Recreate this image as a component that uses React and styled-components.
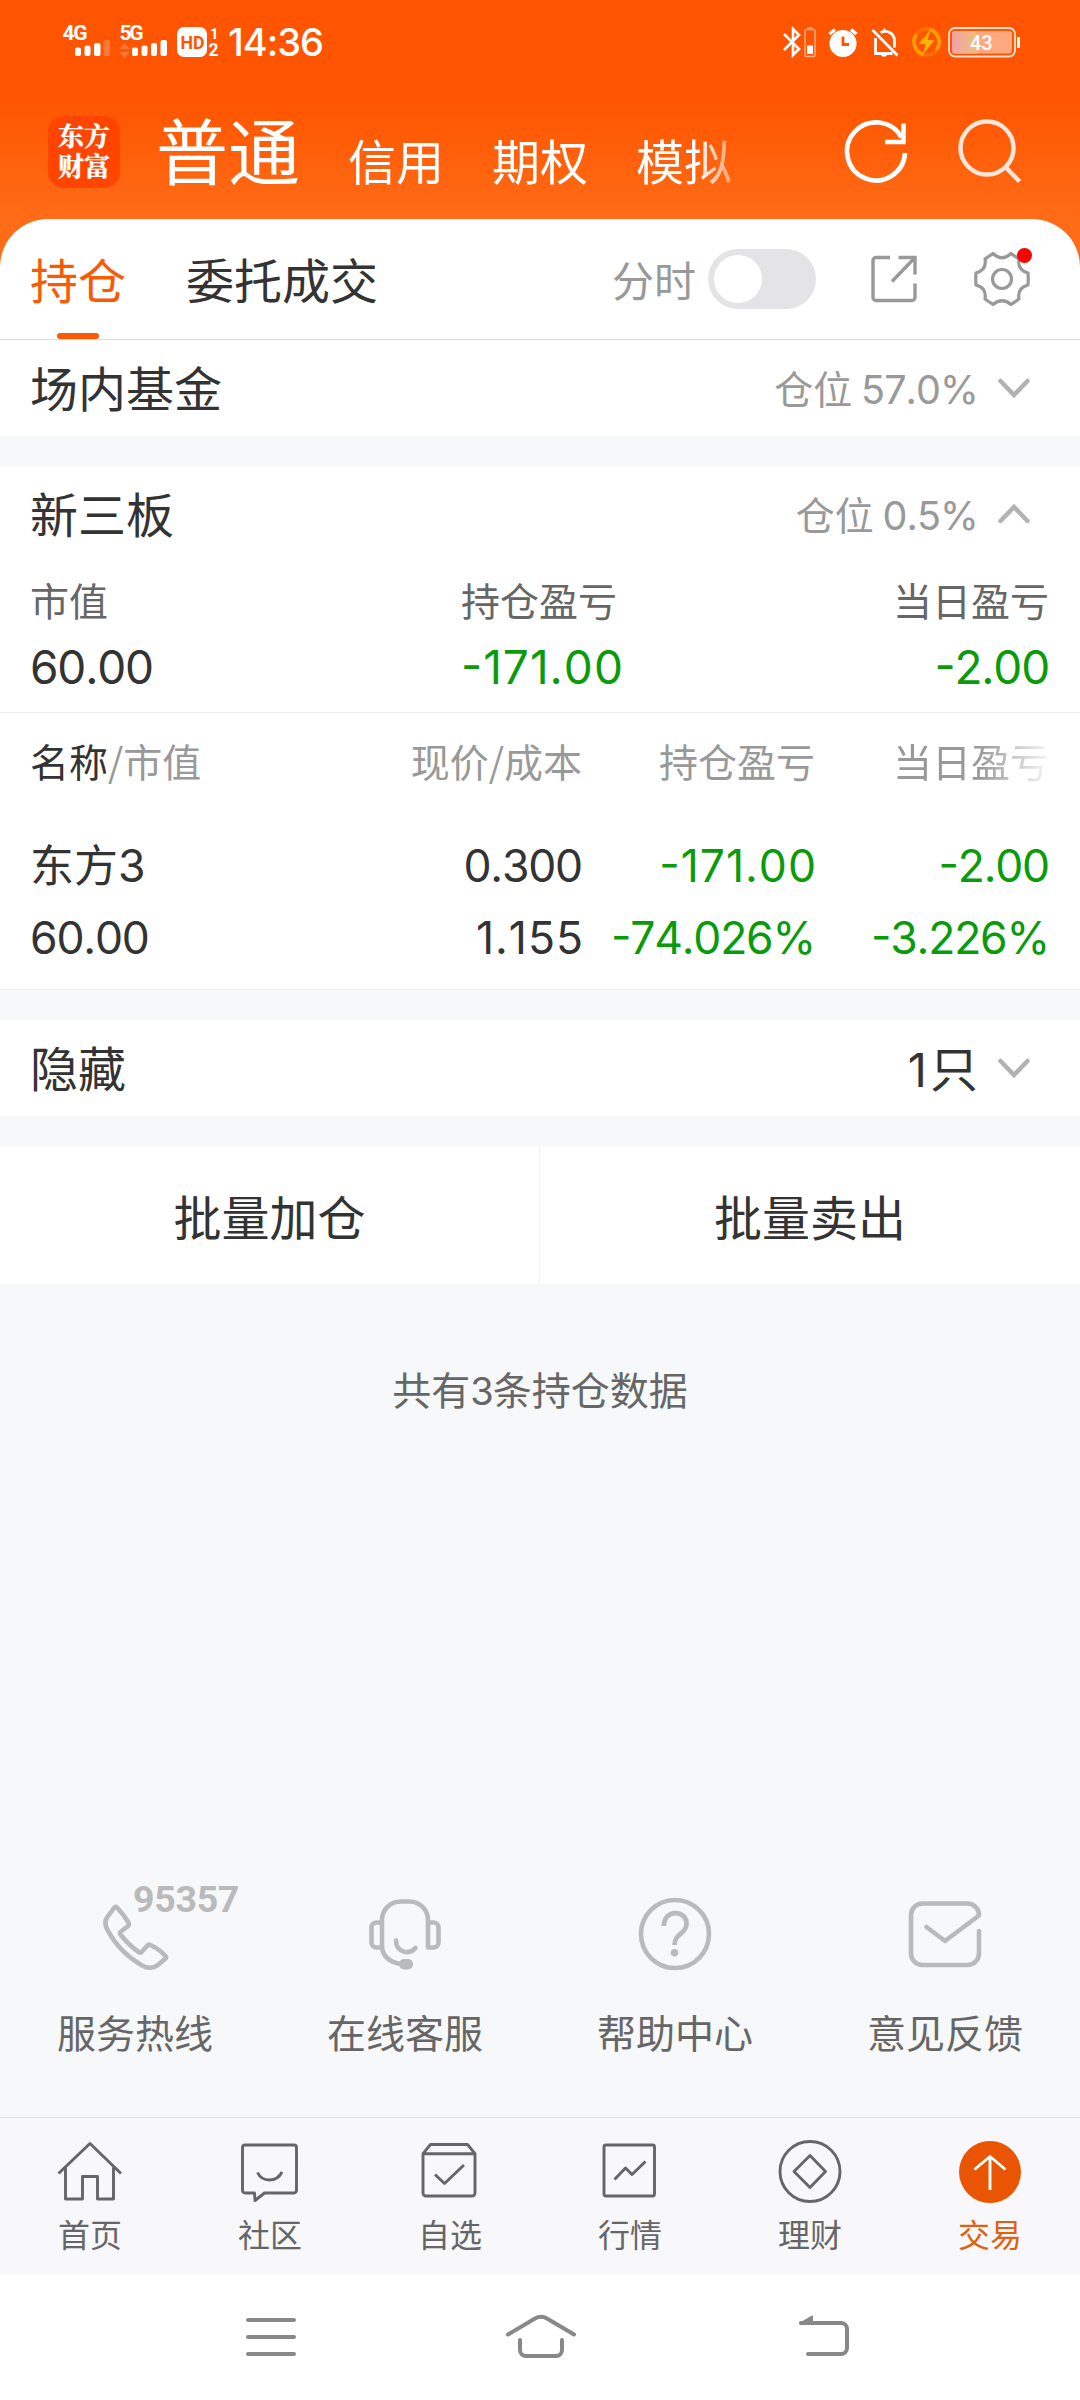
import { useState } from "react";
import styled, { createGlobalStyle } from "styled-components";

const accounts = ["信用", "期权", "模拟"];

const summary = [
  { label: "市值", value: "60.00" },
  { label: "持仓盈亏", value: "-171.00" },
  { label: "当日盈亏", value: "-2.00" },
];

const holding = {
  name: "东方",
  suffix: "3",
  value: "60.00",
  cells: [
    ["0.300", "1.155"],
    ["-171.00", "-74.026%"],
    ["-2.00", "-3.226%"],
  ],
};

const isDown = (value) => value.startsWith("-");

export default function App() {
  const [minuteMode, setMinuteMode] = useState(false);

  return (
    <StyledPage>
      <GlobalStyle />
      <Header />
      <StyledCard>
        <StyledTabs>
          <StyledTab $active>持仓</StyledTab>
          <StyledTab>委托成交</StyledTab>
          <StyledTools>
            <span>分时</span>
            <StyledSwitch
              aria-label="分时"
              $on={minuteMode}
              onClick={() => setMinuteMode(!minuteMode)}
            />
            <ShareIcon />
            <StyledSettings>
              <GearIcon />
            </StyledSettings>
          </StyledTools>
        </StyledTabs>
        <StyledSectionRow>
          <span>场内基金</span>
          <StyledPosition>
            仓位 <StyledNum>57.0%</StyledNum>
          </StyledPosition>
          <Chevron />
        </StyledSectionRow>
      </StyledCard>

      <StyledBlock $line>
        <StyledSectionRow>
          <span>新三板</span>
          <StyledPosition>
            仓位 <StyledNum>0.5%</StyledNum>
          </StyledPosition>
          <Chevron up />
        </StyledSectionRow>
        <StyledSummary>
          {summary.map(({ label, value }) => (
            <StyledSummaryItem key={label}>
              <span>{label}</span>
              <Amount value={value} size={46} />
            </StyledSummaryItem>
          ))}
        </StyledSummary>
        <StyledTableHead>
          <span>
            <em>名称</em>/市值
          </span>
          <span>现价/成本</span>
          <span>持仓盈亏</span>
          <StyledFading>当日盈亏</StyledFading>
        </StyledTableHead>
        <StyledHolding>
          <StyledCell>
            <StyledAmount $size={44.5}>
              <StyledName>{holding.name}</StyledName>
              {holding.suffix}
            </StyledAmount>
            <Amount value={holding.value} />
          </StyledCell>
          {holding.cells.map(([top, bottom]) => (
            <StyledCell key={top}>
              <Amount value={top} />
              <Amount value={bottom} />
            </StyledCell>
          ))}
        </StyledHolding>
      </StyledBlock>

      <StyledBlock>
        <StyledSectionRow>
          <span>隐藏</span>
          <StyledHiddenCount>
            <StyledNum $size={47} $spacing={3}>1</StyledNum>只
          </StyledHiddenCount>
          <Chevron />
        </StyledSectionRow>
      </StyledBlock>

      <StyledActions>
        <button>批量加仓</button>
        <button>批量卖出</button>
      </StyledActions>
      <StyledTotal>
        共有<StyledNum $size={38}>3</StyledNum>条持仓数据
      </StyledTotal>

      <StyledServices>
        <StyledService>
          <PhoneIcon />
          <StyledHotline>95357</StyledHotline>
          <span>服务热线</span>
        </StyledService>
        <StyledService>
          <HeadsetIcon />
          <span>在线客服</span>
        </StyledService>
        <StyledService>
          <HelpIcon />
          <span>帮助中心</span>
        </StyledService>
        <StyledService>
          <MailIcon />
          <span>意见反馈</span>
        </StyledService>
      </StyledServices>

      <BottomTabs />
      <SystemNav />
    </StyledPage>
  );
}

// "1" is much narrower than the other digits, so amounts with it are set looser
function Amount({ value, size = 44.5 }) {
  return (
    <StyledAmount $size={size} $down={isDown(value)} $loose={value.includes("1")}>
      {value}
    </StyledAmount>
  );
}

function Header() {
  return (
    <StyledHeader>
      <StatusBar />
      <StyledAccountBar>
        <StyledLogo>
          <span>东方财富</span>
        </StyledLogo>
        <StyledAccounts>
          <StyledAccount $active>普通</StyledAccount>
          {accounts.map((name) => (
            <StyledAccount key={name}>{name}</StyledAccount>
          ))}
        </StyledAccounts>
        <svg width="72" height="72" viewBox="0 0 72 72" fill="none" stroke="#fff" strokeWidth="4.6">
          <path d="M66 37a29 29 0 1 1-3.5-15.5" />
          <path d="M64.5 7.5v18.5h-18.5" />
        </svg>
        <svg width="72" height="72" viewBox="0 0 72 72" fill="none" stroke="#ffe6da" strokeWidth="4.5">
          <circle cx="36" cy="32" r="26.5" />
          <path d="M54.5 51l14 14.5" />
        </svg>
      </StyledAccountBar>
    </StyledHeader>
  );
}

function StatusBar() {
  return (
    <StyledStatus>
      <svg width="158" height="56" viewBox="62 14 158 56" fill="#fff">
        <StyledSvgText x="62.5" y="40" fontSize="21" textLength="25">4G</StyledSvgText>
        <rect x="75" y="47.5" width="6" height="8.5" rx="2" />
        <rect x="84.5" y="45.5" width="6" height="10.5" rx="2" />
        <rect x="94" y="43" width="6.5" height="13" rx="2" />
        <rect x="103.5" y="40" width="6.5" height="16" rx="2" opacity=".22" />
        <StyledSvgText x="119.5" y="40" fontSize="21" textLength="24">5G</StyledSvgText>
        <path d="M119.5 49l5-6 5 6zM119.5 52l5 6 5-6z" opacity=".22" />
        <rect x="132" y="47.5" width="6" height="8.5" rx="2" />
        <rect x="141.5" y="45.5" width="6" height="10.5" rx="2" />
        <rect x="151" y="43" width="6" height="13" rx="2" />
        <rect x="160.5" y="40" width="6.5" height="16" rx="2" />
        <rect x="177" y="27" width="30" height="30" rx="7" />
        <StyledSvgText x="180.5" y="49" fontSize="19" textLength="24" lengthAdjust="spacingAndGlyphs" fill="#ff5500">
          HD
        </StyledSvgText>
        <StyledSvgText x="210" y="38.5" fontSize="15">1</StyledSvgText>
        <StyledSvgText x="208.5" y="56" fontSize="17.5">2</StyledSvgText>
      </svg>
      <StyledClock>14:36</StyledClock>
      <svg width="242" height="36" viewBox="780 24 242 36" fill="none" stroke="#fff" strokeWidth="2.8">
        <path d="M784 34l15 15-6 6V29l6 6-15 15" strokeWidth="2.6" />
        <g stroke="#ffa987" strokeWidth="1.5">
          <rect x="805" y="29.5" width="10" height="27" rx="1.5" />
          <path d="M807 28h6" />
        </g>
        <rect x="807" y="45.5" width="6" height="8.5" fill="#fff" stroke="none" />
        <circle cx="843" cy="43.5" r="13.6" fill="#fff" stroke="none" />
        <path d="M829.5 34l5.5-4.5M856.5 34l-5.5-4.5" strokeWidth="3.5" />
        <path d="M843 36.5v8h6" stroke="#ff5500" />
        <path d="M872.5 30l25 25.5M875.5 38v15.5h17M880.5 32.5c8-3.5 14 2 14 8.5v6.5M883.5 29.8h2" />
        <path d="M881 54.5h6c0 3-6 3-6 0z" fill="#fff" stroke="none" />
        <circle cx="926.7" cy="42" r="13" stroke="#ff7000" strokeWidth="3.5" />
        <path d="M930 29.5a13 13 0 0 1 6.5 20M923.5 54.5a13 13 0 0 1-7-20" stroke="#ffa000" strokeWidth="3.5" />
        <path d="M930.5 29.5l-12 14.5h7l-3 11 12-15h-7z" fill="#ffb400" stroke="none" />
        <rect x="949" y="28" width="66" height="28.5" rx="6" stroke="#ffe0d0" strokeWidth="1.8" />
        <rect x="952" y="31" width="60" height="22.5" rx="3" fill="#ffa880" stroke="none" />
        <path d="M955 31h22v22.5h-22a3 3 0 0 1-3-3v-16.5a3 3 0 0 1 3-3z" fill="url(#charge)" stroke="none" />
        <path d="M1018.5 37v11" strokeWidth="3" />
        <StyledSvgText x="970" y="49.5" fontSize="20" fill="#fff" stroke="none" $regular>
          43
        </StyledSvgText>
        <defs>
          <linearGradient id="charge">
            <stop offset="0" stopColor="#f2a0a8" />
            <stop offset="1" stopColor="#efc07c" />
          </linearGradient>
        </defs>
      </svg>
    </StyledStatus>
  );
}

function Chevron({ up }) {
  return (
    <svg width="40" height="40" viewBox="0 0 40 40" fill="none" stroke="#b2b2b2" strokeWidth="4.5" strokeLinecap="round">
      <path d={up ? "M6.5 27L20 13 33.5 27" : "M6.5 13L20 27 33.5 13"} />
    </svg>
  );
}

function ShareIcon() {
  return (
    <svg width="54" height="54" viewBox="0 0 54 54" fill="none" stroke="#999" strokeWidth="3.4">
      <path d="M22 5.5H8a3 3 0 0 0-3 3v37a3 3 0 0 0 3 3h36a3 3 0 0 0 3-3V31.5" />
      <path d="M30.5 5.5H47V22.5M24 29.5L46.5 6" />
    </svg>
  );
}

function GearIcon() {
  return (
    <svg width="60" height="60" viewBox="-30 -30 60 60" fill="none" stroke="#999" strokeWidth="3.2" strokeLinejoin="round">
      <path d="M-9-25.5Q0-17 9-25.5L17-20Q15-9 26-6Q26.5 0 26 6Q15 9 17 20L9 25.5Q0 18 -9 25.5L-17 20Q-15 9 -26 6Q-26.5 0 -26-6Q-15-9 -17-20Z" />
      <circle r="9.5" />
    </svg>
  );
}

function ServiceIcon({ children }) {
  return (
    <svg width="80" height="80" viewBox="0 0 80 80" fill="none" stroke="#bababa" strokeWidth="4.6" strokeLinejoin="round">
      {children}
    </svg>
  );
}

function PhoneIcon() {
  return (
    <ServiceIcon>
      <path d="M22 13.5Q29 21 33.5 28.5Q34.5 30.5 33 32L25.5 38Q24.5 39 25.5 40.5Q34 51.5 44.5 58.5Q45.5 59 46.5 58L52.5 51.5Q53.5 50 55.5 51Q64 55 70.5 62Q71.5 63.5 70.5 64.5L63.5 70.5Q56 76.5 47 71.5Q24 58 12.5 36Q8.5 29 12 23.5L19 14Q20.5 12 22 13.5Z" />
    </ServiceIcon>
  );
}

function HeadsetIcon() {
  return (
    <ServiceIcon>
      <path d="M17 53.5V26A18.5 18.5 0 0 1 35.5 7.5H44.5A18.5 18.5 0 0 1 63 26V53.5H68.5A5 5 0 0 0 73.5 48.5V33.5A5 5 0 0 0 68.5 28.5H63" />
      <path d="M17 28.5H11.5A5 5 0 0 0 6.5 33.5V48.5A5 5 0 0 0 11.5 53.5H17Q18.5 66.5 35 70" />
      <path d="M31 46.5C31 58 44 61.5 50.5 54" strokeLinecap="round" />
      <rect x="34" y="65" width="14" height="10.5" rx="5" fill="#bababa" stroke="none" />
    </ServiceIcon>
  );
}

function HelpIcon() {
  return (
    <ServiceIcon>
      <circle cx="40" cy="40" r="34" />
      <path d="M29 32C28.5 15 52 15 51.5 30.5C51 40 40 39 39.5 51" strokeWidth="4.8" />
      <circle cx="39.5" cy="58.7" r="3.8" fill="#bababa" stroke="none" />
    </ServiceIcon>
  );
}

function MailIcon() {
  return (
    <ServiceIcon>
      <path
        d="M74 37V59.5A11.5 11.5 0 0 1 62.5 71H17.5A11.5 11.5 0 0 1 6 59.5V21A11.5 11.5 0 0 1 17.5 9.5H62.5A11.5 11.5 0 0 1 74 21.5L40 47 21.5 33"
        strokeLinecap="round"
      />
    </ServiceIcon>
  );
}

const tabs = [
  {
    label: "首页",
    icon: <path d="M4.5 37.5L36 7.5 67 37.5M11.5 31.5V63H28.5V40.5H43.5V63H59.5V31.5" />,
  },
  {
    label: "社区",
    icon: (
      <path d="M20.5 57H11a2.5 2.5 0 0 1-2.5-2.5V11.5a2.5 2.5 0 0 1 2.5-2.5h49a2.5 2.5 0 0 1 2.5 2.5V54.5a2.5 2.5 0 0 1-2.5 2.5H30.5L21 64.5ZM23.5 36.5Q27 44 35.5 44T48 36" />
    ),
  },
  {
    label: "自选",
    icon: (
      <path d="M9 17.7H61V57a3 3 0 0 1-3 3H12a3 3 0 0 1-3-3ZL16.5 8.5H53.5L61 17.7M21 38.5L30.5 47.5 50 29" />
    ),
  },
  {
    label: "行情",
    icon: (
      <>
        <rect x="10" y="9" width="50.5" height="51" rx="2" />
        <path d="M20.5 43.5L31.5 32 38 38.5 51.5 25.5" />
      </>
    ),
  },
  {
    label: "理财",
    icon: (
      <>
        <circle cx="36" cy="35.5" r="30" />
        <path d="M36 19.5L51.5 35.5 36 51.5 20 35.5Z" />
      </>
    ),
  },
  {
    label: "交易",
    active: true,
    icon: (
      <>
        <circle cx="36" cy="36" r="31" fill="#ea5504" stroke="none" />
        <path d="M36 54V21M20.5 33.5L36 20.5 51.5 33.5" stroke="#fff" />
      </>
    ),
  },
];

function BottomTabs() {
  return (
    <StyledBottomTabs>
      {tabs.map(({ label, icon, active }) => (
        <StyledBottomTab key={label} $active={active}>
          <svg width="72" height="72" viewBox="0 0 72 72" fill="none" stroke="#666" strokeWidth="2.9" strokeLinejoin="round">
            {icon}
          </svg>
          {label}
        </StyledBottomTab>
      ))}
    </StyledBottomTabs>
  );
}

function SystemNav() {
  return (
    <StyledSystemNav>
      <svg viewBox="235 2301 72 72">
        <path d="M248 2320h46M248 2337h46M248 2354h46" />
      </svg>
      <svg viewBox="505 2301 72 72">
        <path d="M508 2334.5L535 2318.5Q541 2315 547 2318.5L574 2334.5M520 2340v10a6 6 0 0 0 6 6h30a6 6 0 0 0 6-6v-10" />
      </svg>
      <svg viewBox="787 2301 72 72">
        <path d="M801 2323h40a6 6 0 0 1 6 6v19a6 6 0 0 1-6 6h-33" />
        <path d="M800 2323.5l12-7v7z" fill="#888" strokeWidth="2" />
      </svg>
    </StyledSystemNav>
  );
}

const GlobalStyle = createGlobalStyle`
  body {
    margin: 0;
    background-color: #f6f8fa;
  }

  button {
    all: unset;
    box-sizing: border-box;
    cursor: pointer;
  }

  svg {
    display: block;
    flex-shrink: 0;
  }
`;

const StyledPage = styled.div`
  width: 1080px;
  height: 2400px;
  display: flex;
  flex-direction: column;
  overflow: hidden;
  color: #333;
  background-color: #f6f8fa;
  font-family: "Noto Sans CJK SC", sans-serif;
  font-size: 48px;
`;

const StyledHeader = styled.header`
  box-sizing: border-box;
  height: 267px;
  margin-bottom: -48px;
  flex-shrink: 0;
  color: #fff;
  background: linear-gradient(#ff5500 100px, #ff6c17 219px);
`;

const StyledStatus = styled.div`
  display: flex;
  align-items: center;
  height: 84px;
  padding: 0 58px 0 62px;

  svg:last-child {
    margin-left: auto;
  }
`;

const StyledSvgText = styled.text`
  font-family: Roboto, sans-serif;
  font-weight: ${({ $regular }) => ($regular ? 500 : 700)};
`;

const StyledClock = styled.span`
  margin-left: 8px;
  font-family: Inter, sans-serif;
  font-weight: 500;
  font-size: 38px;
  line-height: 46px;
  letter-spacing: -1px;
`;

const StyledAccountBar = styled.div`
  display: flex;
  align-items: center;
  height: 135px;
  padding: 0 57px 0 48px;

  > svg + svg {
    margin-left: 40px;
  }
`;

const StyledLogo = styled.div`
  display: flex;
  align-items: center;
  justify-content: center;
  width: 72px;
  height: 72px;
  border-radius: 16px;
  background-color: #ff4500;
  font-family: "Noto Serif CJK SC", "Noto Sans CJK SC", serif;
  font-weight: 700;
  font-size: 26px;
  line-height: 30px;

  span {
    width: 52px;
    margin-top: -3px;
    -webkit-text-stroke: 0.5px #fff;
  }
`;

const StyledAccounts = styled.nav`
  display: flex;
  align-items: flex-end;
  gap: 48px;
  flex: 1;
  height: 76px;
  margin: 0 0 3px 36px;
  mask-image: linear-gradient(90deg, #000 540px, transparent 600px);
`;

const StyledAccount = styled.button`
  font-size: ${({ $active }) => ($active ? 72 : 48)}px;
  line-height: ${({ $active }) => ($active ? 80 : 58)}px;
`;

const StyledCard = styled.section`
  flex-shrink: 0;
  border-radius: 48px 48px 0 0;
  background-color: #fff;
`;

const StyledTabs = styled.div`
  box-sizing: border-box;
  display: flex;
  height: 121px;
  padding: 0 48px 0 30px;
  border-bottom: 1px solid #ddd;
`;

const StyledTab = styled.button`
  display: flex;
  flex-direction: column;
  align-items: center;
  margin-right: 60px;
  line-height: 118px;
  height: 120px;
  color: ${({ $active }) => ($active ? "#f95b05" : "#333")};

  &::after {
    content: "";
    width: 42px;
    height: 6px;
    margin-top: -4px;
    border-radius: 3px;
    background-color: ${({ $active }) => ($active ? "#f95b05" : "transparent")};
  }
`;

const StyledTools = styled.div`
  display: flex;
  align-items: center;
  margin-left: auto;
  color: #999;
  font-size: 42px;
  line-height: 60px;

  > svg {
    margin: 0 50px 0 52px;
  }
`;

const StyledSwitch = styled.button`
  width: 108px;
  height: 60px;
  margin-left: 12px;
  padding: 6px;
  border-radius: 30px;
  background-color: ${({ $on }) => ($on ? "#f95b05" : "#e4e4e7")};

  &::after {
    content: "";
    display: block;
    width: 48px;
    height: 48px;
    margin-left: ${({ $on }) => ($on ? 48 : 0)}px;
    border-radius: 50%;
    background-color: #fff;
  }
`;

const StyledSettings = styled.button`
  position: relative;

  &::after {
    content: "";
    position: absolute;
    top: -1px;
    right: 0;
    width: 15px;
    height: 15px;
    border-radius: 50%;
    background-color: #f00;
  }
`;

const StyledSectionRow = styled.div`
  display: flex;
  height: 96px;
  padding: 0 46px 0 30px;
  line-height: 93px;

  svg {
    margin: 28px 0 0 16px;
  }
`;

const StyledPosition = styled.span`
  margin-left: auto;
  color: #999;
  font-size: 39px;
  line-height: 95px;
`;

const StyledHiddenCount = styled.span`
  margin-left: auto;
`;

const StyledNum = styled.span`
  font-family: Inter, sans-serif;
  font-size: ${({ $size = 39.5 }) => $size}px;
  font-kerning: none;
  line-height: 0;
  letter-spacing: ${({ $spacing = -0.9 }) => $spacing}px;
`;

const StyledAmount = styled.span`
  font-family: Inter, sans-serif;
  font-feature-settings: "case";
  font-kerning: none;
  font-size: ${({ $size }) => $size}px;
  letter-spacing: ${({ $loose }) => ($loose ? 1 : -1.2)}px;
  margin-right: ${({ $loose }) => ($loose ? -2 : 0)}px;
  color: ${({ $down }) => ($down ? "#0a9b0a" : "#333")};
`;

const StyledBlock = styled.section`
  flex-shrink: 0;
  margin-top: 30px;
  background-color: #fff;
  border-bottom: ${({ $line }) => ($line ? "1px solid #eee" : "none")};
`;

const StyledSummary = styled.div`
  box-sizing: border-box;
  display: grid;
  grid-template-columns: 431px 1fr auto;
  height: 151px;
  padding: 7px 31px 0 30px;
  border-bottom: 1px solid #eee;
`;

const StyledSummaryItem = styled.div`
  display: flex;
  flex-direction: column;
  color: #666;
  font-size: 39px;
  line-height: 60px;

  &:last-child {
    text-align: right;
  }

  ${StyledAmount} {
    margin-top: 8px;
  }
`;

const StyledTableHead = styled.div`
  display: grid;
  grid-template-columns: 302px 250px 233px 234px;
  height: 96px;
  padding: 0 30px;
  color: #999;
  font-size: 39px;
  line-height: 95px;
  white-space: nowrap;

  em {
    font-style: normal;
    color: #333;
  }

  span + span {
    text-align: right;
  }
`;

const StyledFading = styled.span`
  mask-image: linear-gradient(90deg, #000 165px, transparent 240px);
`;

const StyledHolding = styled.div`
  display: grid;
  grid-template-columns: 302px 250px 233px 234px;
  height: 180px;
  padding: 0 30px;
`;

const StyledCell = styled.div`
  display: flex;
  flex-direction: column;
  padding-top: 21px;
  line-height: 72px;

  & + & {
    text-align: right;
  }
`;

const StyledName = styled.span`
  font-family: "Noto Sans CJK SC", sans-serif;
  font-size: 44px;
  line-height: 0;
  letter-spacing: 0;
`;

const StyledActions = styled.div`
  display: flex;
  flex-shrink: 0;
  height: 138px;
  margin-top: 30px;
  background-color: #fff;

  button {
    flex: 1;
    text-align: center;
    line-height: 131px;
  }

  button:first-child {
    flex: 0 0 540px;
    border-right: 1px solid #f2f2f2;
  }
`;

const StyledTotal = styled.p`
  margin: 75px 0 0;
  color: #666;
  font-size: 39px;
  line-height: 58px;
  text-align: center;
`;

const StyledServices = styled.div`
  display: grid;
  grid-template-columns: repeat(4, 1fr);
  height: 223px;
  margin-top: auto;
`;

const StyledService = styled.button`
  position: relative;
  display: flex;
  flex-direction: column;
  align-items: center;
  color: #666;
  font-size: 39px;
  line-height: 56px;

  svg {
    margin-bottom: 29px;
  }
`;

const StyledHotline = styled.sup`
  position: absolute;
  top: -17px;
  left: 133px;
  color: #bababa;
  font-family: Roboto, sans-serif;
  font-weight: 700;
  font-size: 37.5px;
  line-height: 44px;
  letter-spacing: -0.3px;
`;

const StyledBottomTabs = styled.nav`
  box-sizing: border-box;
  display: grid;
  grid-template-columns: repeat(6, 1fr);
  flex-shrink: 0;
  height: 157px;
  padding-top: 18px;
  border-top: 1px solid #e1e1e3;
  background-color: #f8f8fa;
`;

const StyledBottomTab = styled.button`
  display: flex;
  flex-direction: column;
  align-items: center;
  font-size: 32px;
  line-height: 50px;
  color: ${({ $active }) => ($active ? "#e35f12" : "#666")};
`;

const StyledSystemNav = styled.nav`
  box-sizing: border-box;
  display: flex;
  flex-shrink: 0;
  height: 126px;
  padding: 27px 221px 0 235px;
  background-color: #fff;

  svg {
    width: 72px;
    height: 72px;
    fill: none;
    stroke: #888;
    stroke-width: 4;
    stroke-linecap: round;
    stroke-linejoin: round;
  }

  svg:nth-child(2) {
    margin: 0 210px 0 198px;
  }
`;
